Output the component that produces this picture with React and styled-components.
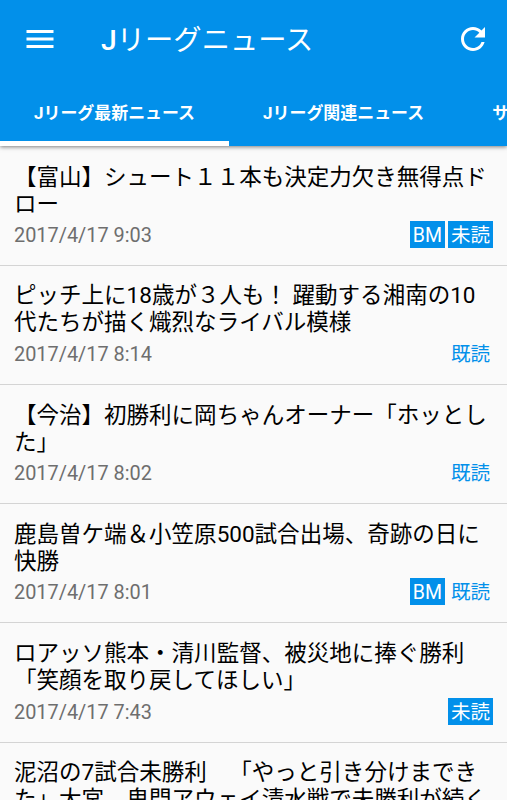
import React from "react";
import styled, { createGlobalStyle } from "styled-components";

const GlobalStyle = createGlobalStyle`
  * {
    box-sizing: border-box;
  }

  html,
  body {
    margin: 0;
    height: 100%;
    overflow: hidden;
  }

  body {
    background-color: #fafafa;
    font-family: Roboto, "Noto Sans CJK JP", sans-serif;
    text-spacing-trim: space-all;
  }
`;

const Screen = styled.div`
  height: 100vh;
  overflow: hidden;
  display: flex;
  flex-direction: column;
`;

// Header

const Header = styled.header`
  position: relative;
  z-index: 1;
  flex: none;
  height: 146px;
  background-color: #0290ea;
  color: #fff;
  box-shadow: 0 1px 4px rgba(0, 0, 0, 0.5);
`;

const Toolbar = styled.div`
  height: 78px;
  padding: 0 16px 0 21.5px;
  display: flex;
  align-items: center;
`;

const IconButton = styled.button`
  display: flex;
  padding: 0;
  border: 0;
  background: none;
  color: inherit;
`;

const Title = styled.h1`
  flex: 1;
  margin: 0 0 0 43.5px;
  padding-top: 4px;
  font-size: 28.3px;
  font-weight: 400;
  line-height: 40px;
`;

const TitleInitial = styled.span`
  font-weight: 500;
`;

const Tabs = styled.nav`
  height: 68px;
  display: flex;
  overflow: hidden;
`;

const Tab = styled.a`
  flex: none;
  padding: 4px 34px 0;
  display: flex;
  align-items: center;
  font-size: 16.95px;
  font-weight: 700;
  white-space: nowrap;
  border-bottom: 5px solid ${(props) => (props.$active ? "#fff" : "transparent")};
`;

// News list

const List = styled.ul`
  margin: 0;
  padding: 0;
  list-style: none;
`;

const Item = styled.li`
  height: 119.25px;
  padding: 16.75px 14px 0;
  border-bottom: 1px solid #d4d4d4;

  &:first-child {
    height: 119.5px;
    padding-top: 17.5px;
  }
`;

const Headline = styled.h2`
  margin: 0;
  font-size: 22.53px;
  font-weight: 400;
  line-height: 27px;
  color: #000;
  white-space: pre;
`;

const Meta = styled.div`
  display: flex;
  align-items: center;
  gap: 3px;
  height: 34px;
`;

const PostedAt = styled.time`
  flex: 1;
  padding-top: 2px;
  font-size: 19.9px;
  color: #6e6e6e;
`;

const Badge = styled.span`
  height: 27px;
  padding: 0 3px;
  font-size: 19.5px;
  line-height: 29px;
  color: ${(props) => (props.$filled ? "#fff" : "#0290ea")};
  background-color: ${(props) => (props.$filled ? "#0290ea" : "transparent")};
`;

const tabs = ["Jリーグ最新ニュース", "Jリーグ関連ニュース", "サッカー日本代表"];

const news = [
  { title: "【富山】シュート１１本も決定力欠き無得点ド\nロー", date: "2017/4/17 9:03", bookmarked: true, read: false },
  { title: "ピッチ上に18歳が３人も！ 躍動する湘南の10\n代たちが描く熾烈なライバル模様", date: "2017/4/17 8:14", read: true },
  { title: "【今治】初勝利に岡ちゃんオーナー「ホッとし\nた」", date: "2017/4/17 8:02", read: true },
  { title: "鹿島曽ケ端＆小笠原500試合出場、奇跡の日に\n快勝", date: "2017/4/17 8:01", bookmarked: true, read: true },
  { title: "ロアッソ熊本・清川監督、被災地に捧ぐ勝利\n「笑顔を取り戻してほしい」", date: "2017/4/17 7:43", read: false },
  { title: "泥沼の7試合未勝利　「やっと引き分けまでき\nた」大宮、鬼門アウェイ清水戦で未勝利が続く", date: "2017/4/17 7:30", read: false },
];

export default function App() {
  return (
    <>
      <GlobalStyle />
      <Screen>
        <Header>
          <Toolbar>
            <IconButton aria-label="menu">
              <svg width="36" height="36" viewBox="0 0 24 24" fill="currentColor">
                <path d="M3 18h18v-2H3v2zm0-5h18v-2H3v2zm0-7v2h18V6H3z" />
              </svg>
            </IconButton>
            <Title>
              <TitleInitial>J</TitleInitial>リーグニュース
            </Title>
            <IconButton aria-label="refresh">
              <svg width="36" height="36" viewBox="0 0 24 24" fill="currentColor">
                <path d="M17.65 6.35C16.2 4.9 14.21 4 12 4c-4.42 0-7.99 3.58-7.99 8s3.57 8 7.99 8c3.73 0 6.84-2.55 7.73-6h-2.08c-.82 2.33-3.04 4-5.65 4-3.31 0-6-2.69-6-6s2.69-6 6-6c1.66 0 3.14.69 4.22 1.78L13 11h7V4l-2.35 2.35z" />
              </svg>
            </IconButton>
          </Toolbar>
          <Tabs>
            {tabs.map((label, index) => (
              <Tab key={label} $active={index === 0}>
                {label}
              </Tab>
            ))}
          </Tabs>
        </Header>

        <List>
          {news.map((item) => (
            <Item key={item.title}>
              <Headline>{item.title}</Headline>
              <Meta>
                <PostedAt>{item.date}</PostedAt>
                {item.bookmarked && <Badge $filled>BM</Badge>}
                <Badge $filled={!item.read}>{item.read ? "既読" : "未読"}</Badge>
              </Meta>
            </Item>
          ))}
        </List>
      </Screen>
    </>
  );
}
